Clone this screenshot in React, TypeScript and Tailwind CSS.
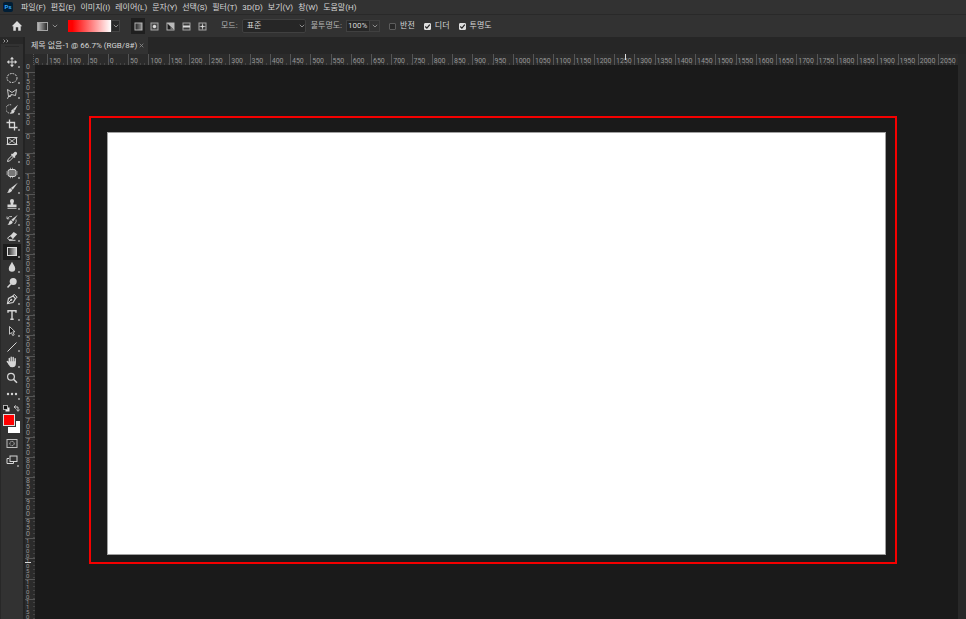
import { useState } from "react";
import type { ReactNode } from "react";

const MENUS = ["파일(F)", "편집(E)", "이미지(I)", "레이어(L)", "문자(Y)", "선택(S)", "필터(T)", "3D(D)", "보기(V)", "창(W)", "도움말(H)"];

const H_MARKS = Array.from({ length: 45 }, (_, i) => Math.abs(i * 50 - 150));
const V_MARKS = Array.from({ length: 27 }, (_, i) => Math.abs(i * 50 - 150));

type Tool = { id: string; label: string; flyout?: boolean; icon: ReactNode };

const TOOLS: Tool[] = [
  {
    id: "move",
    label: "이동 도구",
    flyout: true,
    icon: (
      <>
        <path d="M6 2v8M2 6h8" stroke="currentColor" />
        <path d="M6 .8 8 3.2H4zM6 11.200 8 8.800H4zM.8 6 3.200 4v4zM11.200 6 8.800 4v4z" fill="currentColor" />
      </>
    ),
  },
  {
    id: "marquee",
    label: "원형 선택 윤곽 도구",
    flyout: true,
    icon: <ellipse cx="6" cy="6" rx="5" ry="4.500" fill="none" stroke="currentColor" strokeDasharray="1.800 1" />,
  },
  {
    id: "lasso",
    label: "다각형 올가미 도구",
    flyout: true,
    icon: <path d="M2.500 8.500 1.500 1.500 6 4.500 10.500 1.500 9.500 7.500 5.500 6.500 2.500 8.500 1.500 10.800M5.500 6.500 4.500 8.500 2.500 8.500" fill="none" stroke="currentColor" strokeWidth=".9" />,
  },
  {
    id: "select",
    label: "빠른 선택 도구",
    flyout: true,
    icon: (
      <>
        <path d="M5 10A4.200 4.200 0 1 1 6 2.200" fill="none" stroke="currentColor" strokeDasharray="1.200 1" />
        <path d="M12 1.800 8.800 7.800 6.800 6.200z" fill="currentColor" />
        <path d="M6.600 6.300 8.800 8.200Q8 11 4.300 10.700 6 9 5.300 7.500z" fill="currentColor" />
      </>
    ),
  },
  {
    id: "crop",
    label: "자르기 도구",
    flyout: true,
    icon: <path d="M3.500.5v8h8M.5 3.500h8v8" fill="none" stroke="currentColor" strokeWidth="1.300" />,
  },
  {
    id: "frame",
    label: "프레임 도구",
    icon: (
      <>
        <rect x="1.500" y="2.500" width="9" height="7" fill="none" stroke="currentColor" />
        <path d="m1.500 2.500 9 7m0-7-9 7M.5 2.500h11M.5 9.500h11" stroke="currentColor" strokeWidth=".8" />
      </>
    ),
  },
  {
    id: "eyedropper",
    label: "스포이드 도구",
    flyout: true,
    icon: (
      <>
        <path d="m1.500 10.500.6-2.200L6 4.500 7.500 6 3.700 9.900z" fill="none" stroke="currentColor" />
        <path d="m5 3.500 3.500 3.500 1-1-.6-.8 1.900-1.800A1.700 1.700 0 0 0 8.500 1L6.700 2.900l-.8-.5z" fill="currentColor" />
      </>
    ),
  },
  {
    id: "healing",
    label: "패치 도구",
    flyout: true,
    icon: (
      <>
        <rect x="2" y="2.500" width="8" height="7" rx="2" fill="#777" stroke="currentColor" />
        <path d="M.8 4.500v3M11.200 4.500v3M4 1.300h4M4 10.700h4" stroke="currentColor" strokeWidth=".8" strokeDasharray="1 1" />
      </>
    ),
  },
  {
    id: "brush",
    label: "브러시 도구",
    flyout: true,
    icon: (
      <>
        <path d="M11.800.8 6.700 7.700 4.900 5.900z" fill="currentColor" />
        <path d="M4.500 6.300 6.200 8Q5.500 11 1 10.800 2.500 9.500 2.700 8 3.200 6.300 4.500 6.300z" fill="currentColor" />
      </>
    ),
  },
  {
    id: "stamp",
    label: "복제 도장 도구",
    flyout: true,
    icon: <path d="M4 3a2 2 0 1 1 4 0c0 1.200-.8 1.800-.8 3.500H10.500V9H1.500V6.500H4.800C4.800 4.800 4 4.200 4 3zM1.500 9.800h9v1h-9z" fill="currentColor" />,
  },
  {
    id: "history",
    label: "작업 내역 브러시 도구",
    flyout: true,
    icon: (
      <>
        <path d="M11.800.8 7.200 7.500 5.300 5.800z" fill="currentColor" />
        <path d="M5 6.300 6.800 8Q6 11 1.500 10.800 3 9.500 3.200 8 3.700 6.300 5 6.300z" fill="currentColor" />
        <path d="M1 2.500v2.300h2.300M1.300 4.500Q3 1.800 6 2.500M10 5.500Q11 8 8.500 10" fill="none" stroke="currentColor" strokeWidth=".8" />
      </>
    ),
  },
  {
    id: "eraser",
    label: "지우개 도구",
    flyout: true,
    icon: (
      <>
        <path d="m4.200 5.800 3.500-3.800 3.500 2.200-4 4.300z" fill="currentColor" />
        <path d="M4.200 5.800 1.500 8.200l1.600 1.500h2.600l1.500-1.400zM3 10.300h6.500" fill="none" stroke="currentColor" />
      </>
    ),
  },
  { id: "gradient", label: "그레이디언트 도구", flyout: true, icon: <rect x="1.500" y="1.500" width="9" height="8" fill="url(#toolGradient)" stroke="#dcdcdc" /> },
  { id: "blur", label: "흐림 효과 도구", flyout: true, icon: <path d="M6 .8C7 3.500 9.200 5 9.200 7.500a3.200 3.200 0 0 1-6.400 0C2.800 5 5 3.500 6 .8z" fill="currentColor" /> },
  {
    id: "dodge",
    label: "닷지 도구",
    flyout: true,
    icon: (
      <>
        <circle cx="7.200" cy="4.500" r="3.500" fill="currentColor" />
        <path d="M4.800 7 1.500 10.500" stroke="currentColor" strokeWidth="1.500" />
      </>
    ),
  },
  {
    id: "pen",
    label: "펜 도구",
    flyout: true,
    icon: (
      <>
        <path d="m1.500 10.500 1-5L7 3l2.500 2.500-2.500 4z" fill="none" stroke="currentColor" strokeWidth="1.200" />
        <path d="m7 3 1.200-1.700 3 3-1.700 1.200M1.500 10.500 5 7" fill="none" stroke="currentColor" />
        <circle cx="5.300" cy="6.700" r="1" fill="currentColor" />
      </>
    ),
  },
  { id: "type", label: "수평 문자 도구", flyout: true, icon: <path d="M2 3.800V1.700h8v2.100M6 1.700v8.600M4.300 10.300h3.400" fill="none" stroke="currentColor" strokeWidth="1.400" /> },
  { id: "path", label: "직접 선택 도구", flyout: true, icon: <path d="m3.500 1.500 5.500 5.300H6.800l1.400 3-1.500.7-1.300-3-1.900 1.700z" fill="#1b1b1b" stroke="currentColor" strokeWidth=".9" /> },
  { id: "line", label: "선 도구", flyout: true, icon: <path d="m1.500 10.500 9-9" stroke="currentColor" /> },
  {
    id: "hand",
    label: "손 도구",
    flyout: true,
    icon: (
      <>
        <path d="M3.300 6V2.500M5.200 5.500V1.300M7.200 5.500V1.500M9.200 6V2.800M1.300 5.500l2 2.500" stroke="currentColor" strokeWidth="1.400" strokeLinecap="round" />
        <path d="M2.700 5.200h7.200V8Q9.500 11.200 6.500 11.200T2.500 8.500z" fill="currentColor" />
      </>
    ),
  },
  {
    id: "zoom",
    label: "돋보기 도구",
    icon: (
      <>
        <circle cx="5" cy="4.800" r="3.400" fill="none" stroke="currentColor" strokeWidth="1.200" />
        <path d="m7.500 7.300 3.500 3.500" stroke="currentColor" strokeWidth="1.600" />
      </>
    ),
  },
  {
    id: "more",
    label: "도구 모음 편집",
    flyout: true,
    icon: (
      <>
        <circle cx="2" cy="6" r="1.200" fill="currentColor" />
        <circle cx="6" cy="6" r="1.200" fill="currentColor" />
        <circle cx="10" cy="6" r="1.200" fill="currentColor" />
      </>
    ),
  },
];

const GRADIENT_STYLES = [
  { id: "linear", label: "선형", icon: <rect x="1" y="1" width="7" height="7" fill="url(#darkGradient)" stroke="#b4b4b4" /> },
  {
    id: "radial",
    label: "방사형",
    icon: (
      <>
        <rect x="1" y="1" width="7" height="7" fill="#4a4a4a" stroke="#a4a4a4" />
        <circle cx="4.500" cy="4.500" r="1.700" fill="#dcdcdc" />
      </>
    ),
  },
  {
    id: "angle",
    label: "각진",
    icon: (
      <>
        <rect x="1" y="1" width="7" height="7" fill="#1e1e1e" stroke="#b4b4b4" />
        <path d="M1 1h7v7z" fill="#b9b9b9" />
        <path d="M4.500 4.500 8 8H4.500z" fill="#777" />
      </>
    ),
  },
  {
    id: "reflected",
    label: "반사",
    icon: (
      <>
        <rect x="1" y="1" width="7" height="7" fill="#3a3a3a" stroke="#a4a4a4" />
        <path d="M1 4.500h7" stroke="#dcdcdc" strokeWidth="2" />
      </>
    ),
  },
  {
    id: "diamond",
    label: "다이아몬드",
    icon: (
      <>
        <rect x="1" y="1" width="7" height="7" fill="#3a3a3a" stroke="#a4a4a4" />
        <path d="M4.500 1.500v6M1.500 4.500h6" stroke="#bcbcbc" strokeWidth=".8" />
        <path d="m4.500 3 1.500 1.500L4.500 6 3 4.500z" fill="#dcdcdc" />
      </>
    ),
  },
];

function Chevron() {
  return (
    <svg className="h-1 w-1.5" viewBox="0 0 6 4" fill="none" stroke="#8c8c8c">
      <path d="m.8.8 2.200 2.200L5.200.8" />
    </svg>
  );
}

function Separator() {
  return <span className="h-4 w-px bg-[#282828]" />;
}

function Check({ label, defaultChecked }: { label: string; defaultChecked?: boolean }) {
  const [on, setOn] = useState(!!defaultChecked);
  return (
    <label className="flex items-center gap-1">
      <span className="relative flex">
        <input
          type="checkbox"
          checked={on}
          onChange={(e) => setOn(e.target.checked)}
          className="size-[7px] appearance-none rounded-[1px] border border-[#5c5c5c] bg-[#282828] checked:border-[#dedede] checked:bg-[#dedede]"
        />
        {on && (
          <svg className="pointer-events-none absolute inset-0 size-[7px]" viewBox="0 0 7 7" fill="none" stroke="#222" strokeWidth="1.200">
            <path d="m1.300 3.500 1.600 1.700L5.800 1.600" />
          </svg>
        )}
      </span>
      {label}
    </label>
  );
}

function MenuBar() {
  return (
    <nav className="flex h-3.5 shrink-0 items-center pl-[3px]">
      <svg className="mr-2 h-2.5 w-2.5" viewBox="0 0 10 10">
        <rect width="10" height="10" rx="2" fill="#001e36" />
        <text x="5" y="7.200" textAnchor="middle" fontSize="6" fontWeight="700" fill="#31a8ff">Ps</text>
      </svg>
      <div className="flex gap-[5px] pt-0.5">
        {MENUS.map((m) => (
          <button key={m} className="whitespace-nowrap">{m}</button>
        ))}
      </div>
    </nav>
  );
}

function OptionsBar() {
  const [style, setStyle] = useState("linear");
  return (
    <div className="flex h-[23px] shrink-0 items-center whitespace-nowrap border-t border-[#292929] pl-[11px]">
      <button aria-label="홈">
        <svg className="h-3 w-3" viewBox="0 0 12 12" fill="#dcdcdc">
          <path d="M6 1 .8 6.200h1.500v4.600h2.500V7.300h2.400v3.500h2.500V6.200h1.500z" />
        </svg>
      </button>
      <div className="ml-2 mr-1.5"><Separator /></div>
      <button aria-label="도구 사전 설정" className="flex items-center gap-1">
        <svg className="h-[9px] w-[11px]" viewBox="0 0 11 9">
          <rect x=".5" y=".5" width="10" height="8" fill="url(#optGradient)" stroke="#a4a4a4" />
        </svg>
        <Chevron />
      </button>
      <button aria-label="그레이디언트 편집" className="ml-2.5 h-3 w-[43px] bg-linear-to-r/srgb from-[#ff0000] from-10% to-white" />
      <button aria-label="그레이디언트 피커" className="flex h-3 w-[9px] items-center justify-center border border-[#444] bg-[#282828]">
        <Chevron />
      </button>
      <div className="ml-[5px] mr-1.5"><Separator /></div>
      <div className="flex gap-0.5">
        {GRADIENT_STYLES.map((g) => (
          <button
            key={g.id}
            aria-label={g.label}
            onClick={() => setStyle(g.id)}
            className={`flex h-4 w-3.5 items-center justify-center ${style === g.id ? "bg-[#1f1f1f]" : ""}`}
          >
            <svg className="size-[9px]" viewBox="0 0 9 9">{g.icon}</svg>
          </button>
        ))}
      </div>
      <div className="mx-1.5"><Separator /></div>
      <label htmlFor="mode" className="mr-1 text-[#b4b4b4]">모드:</label>
      <div className="relative flex items-center">
        <select id="mode" className="h-3.5 w-16 appearance-none rounded-[2px] border border-[#404040] bg-[#262626] pl-1">
          <option>표준</option>
          <option>디졸브</option>
        </select>
        <span className="pointer-events-none absolute right-px"><Chevron /></span>
      </div>
      <label htmlFor="opacity" className="ml-[5px] mr-1 text-[#b4b4b4]">불투명도:</label>
      <input id="opacity" defaultValue="100%" className="h-3 w-6 border border-[#404040] bg-[#262626] pl-px" />
      <button aria-label="불투명도 슬라이더" className="flex h-3 w-2.5 items-center justify-center border border-l-0 border-[#404040]">
        <Chevron />
      </button>
      <div className="ml-1 mr-[5px]"><Separator /></div>
      <div className="flex gap-[9px]">
        <Check label="반전" />
        <Check label="디더" defaultChecked />
        <Check label="투명도" defaultChecked />
      </div>
    </div>
  );
}

function Toolbar() {
  const [active, setActive] = useState("gradient");
  return (
    <aside className="flex w-[23px] shrink-0 flex-col border-l border-[#282828] bg-[#323232]">
      <button aria-label="패널 확장" className="flex h-[7px] shrink-0 items-center bg-[#282828] pl-0.5">
        <svg className="h-1 w-1.5" viewBox="0 0 6 4" fill="none" stroke="#b4b4b4" strokeWidth=".8">
          <path d="m.5.5 1.500 1.500L.5 3.500M3.500.5 5 2 3.500 3.500" />
        </svg>
      </button>
      <div className="mx-1 mb-[7px] mt-0.5 h-px shrink-0 bg-[#282828]" />
      <div className="flex h-[348px] shrink-0 flex-col">
        {TOOLS.map((t) => (
          <button
            key={t.id}
            aria-label={t.label}
            onClick={() => setActive(t.id)}
            className={`relative ml-0.5 flex min-h-0 w-[18px] flex-1 items-center justify-center ${active === t.id ? "bg-[#1c1c1c]" : ""}`}
          >
            <svg className="h-3 w-3" viewBox="0 0 12 12" fill="none">{t.icon}</svg>
            {t.flyout && <span className="absolute bottom-0.5 right-px size-0.5 bg-[#8a8a8a]" />}
          </button>
        ))}
      </div>
      <div className="flex h-3 shrink-0 items-center gap-[3px] pl-0.5">
        <button aria-label="기본 색상">
          <svg className="size-[7px]" viewBox="0 0 7 7">
            <rect x="2.500" y="2.500" width="4" height="4" fill="#eee" />
            <rect x=".5" y=".5" width="4" height="4" fill="#111" stroke="#ccc" strokeWidth=".8" />
          </svg>
        </button>
        <button aria-label="색상 전환">
          <svg className="size-[7px]" viewBox="0 0 7 7" fill="none" stroke="currentColor">
            <path d="M1.500 2H5v3.500M2.800.4 1 2l1.800 1.600M3.500 4.500 5 6.300l1.700-1.800" strokeWidth=".9" />
          </svg>
        </button>
      </div>
      <div className="relative ml-0.5 h-[19px] w-[17px] shrink-0">
        <button aria-label="배경색" className="absolute bottom-0 right-0 size-3 bg-white" />
        <button aria-label="전경색" className="absolute left-0 top-0 size-3 border border-[#dcdcdc] bg-[#ff0000] outline outline-[#323232]" />
      </div>
      <button aria-label="빠른 마스크" className="ml-[5px] mt-1.5 h-[9px] shrink-0">
        <svg className="h-[9px] w-3" viewBox="0 0 12 9" fill="none" stroke="#bdbdbd">
          <rect x="1" y=".5" width="10" height="8" />
          <circle cx="6" cy="4.500" r="2.200" strokeDasharray="1.300 .6" />
        </svg>
      </button>
      <button aria-label="화면 모드" className="relative ml-[5px] mt-[7px] h-2.5 shrink-0">
        <svg className="h-2.5 w-3" viewBox="0 0 12 10" fill="none" stroke="currentColor">
          <path d="M3 3.500H1v5h6.500V7" />
          <rect x="4" y="1" width="7" height="5.500" />
        </svg>
        <span className="absolute -bottom-0.5 right-1 size-0.5 bg-[#8a8a8a]" />
      </button>
    </aside>
  );
}

function TopRuler() {
  return (
    <div className="flex h-[11px] shrink-0 bg-[#2b2b2b] text-[7px] leading-[14px] text-[#979797]">
      <div className="w-[9px] shrink-0 border-r border-dotted border-[#555]" />
      <div className="w-[13px] shrink-0 bg-[repeating-linear-gradient(90deg,#444_0_1px,transparent_1px_4px)] bg-[length:100%_2px] bg-bottom bg-no-repeat pl-px">0</div>
      {H_MARKS.map((m, i) => (
        <div
          key={i}
          className="relative min-w-0 flex-1 whitespace-nowrap border-l border-[#555] bg-[repeating-linear-gradient(90deg,transparent_0_3px,#444_3px_4px)] bg-[length:100%_2px] bg-bottom bg-no-repeat pl-px"
        >
          {m}
          {m === 1250 && <span className="absolute left-1/2 top-0 h-1.5 w-px bg-[#dcdcdc]" />}
        </div>
      ))}
    </div>
  );
}

function SideRuler() {
  return (
    <div className="flex w-[10px] shrink-0 flex-col bg-[#2b2b2b] text-[7px] text-[#979797]">
      <div className="h-[7px] shrink-0 pl-px leading-[5px]">0</div>
      {V_MARKS.map((m, i) => (
        <div
          key={i}
          className="relative min-h-0 flex-1 bg-[repeating-linear-gradient(180deg,transparent_0_3px,#444_3px_4px)] bg-[length:2px_100%] bg-right bg-no-repeat shadow-[inset_0_1px_#555]"
        >
          {/* digits stack one per line */}
          <p className={`w-1.5 break-all pl-px ${m >= 1000 ? "text-[6px] leading-[5px]" : "pt-px leading-[6px]"}`}>{m}</p>
          {m === 1050 && <span className="absolute left-0 top-1 h-px w-1.5 bg-[#dcdcdc]" />}
        </div>
      ))}
    </div>
  );
}

export default function App() {
  return (
    <div className="flex h-screen flex-col overflow-hidden bg-[#323232] font-[Roboto,'Noto_Sans_CJK_KR',sans-serif] text-[8px] leading-3 text-[#d6d6d6]">
      <svg className="absolute size-0">
        <defs>
          <linearGradient id="toolGradient">
            <stop offset="0" stopColor="#222" />
            <stop offset="1" stopColor="#d0d0d0" />
          </linearGradient>
          <linearGradient id="optGradient">
            <stop offset="0" stopColor="#c0c0c0" />
            <stop offset="1" stopColor="#222" />
          </linearGradient>
          <linearGradient id="darkGradient">
            <stop offset="0" stopColor="#222" />
            <stop offset="1" stopColor="#909090" />
          </linearGradient>
        </defs>
      </svg>
      <MenuBar />
      <OptionsBar />
      <div className="flex min-h-0 flex-1">
        <Toolbar />
        <div className="flex min-w-0 flex-1 flex-col border-l-2 border-[#232323]">
          <div className="flex h-[17px] shrink-0 bg-[#262626]">
            <div className="flex items-center gap-0.5 bg-[#323232] pl-1.5 pr-1">
              <span className="whitespace-nowrap">제목 없음-1 @ 66.7% (RGB/8#)</span>
              <button aria-label="닫기">
                <svg className="size-[5px]" viewBox="0 0 5 5" stroke="#8f8f8f" strokeWidth=".8">
                  <path d="m.7.7 3.600 3.600M4.300.7.7 4.300" />
                </svg>
              </button>
            </div>
          </div>
          <div className="flex min-h-0 flex-1">
            <div className="flex min-w-0 flex-1 flex-col">
              <TopRuler />
              <div className="flex min-h-0 flex-1">
                <SideRuler />
                <main className="flex min-w-0 flex-1 bg-[#1a1a1a] pb-[55px] pl-[54px] pr-[61px] pt-[51px]">
                  <div className="flex flex-1 border-2 border-[#f50000] pb-[7px] pl-4 pr-[9px] pt-3.5">
                    <div className="flex-1 border border-[#a0a0a0] bg-white" />
                  </div>
                </main>
              </div>
            </div>
            <div className="w-2 shrink-0 bg-[#282828]" />
          </div>
        </div>
      </div>
    </div>
  );
}
